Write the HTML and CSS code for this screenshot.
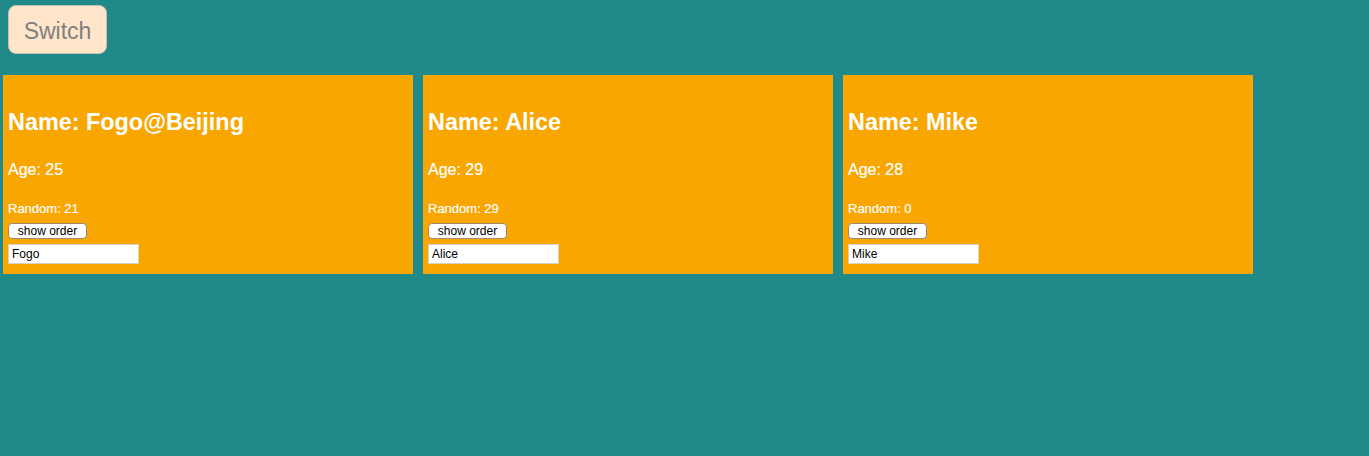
FILE: index.html
```html
<!DOCTYPE html>
<html>
<head>
<meta charset="utf-8">
<link rel="stylesheet" href="styles.css">
</head>
<body>
<div class="top"><button class="switch">Switch</button></div>
<div class="cards">
  <div class="card">
    <h2 class="name">Name: Fogo@Beijing</h2>
    <p class="age">Age: 25</p>
    <p class="random">Random: 21</p>
    <button class="order">show order</button>
    <input class="field" type="text" value="Fogo">
  </div>
  <div class="card">
    <h2 class="name">Name: Alice</h2>
    <p class="age">Age: 29</p>
    <p class="random">Random: 29</p>
    <button class="order">show order</button>
    <input class="field" type="text" value="Alice">
  </div>
  <div class="card">
    <h2 class="name">Name: Mike</h2>
    <p class="age">Age: 28</p>
    <p class="random">Random: 0</p>
    <button class="order">show order</button>
    <input class="field" type="text" value="Mike">
  </div>
</div>
</body>
</html>
```
FILE: styles.css
```css
html, body {
  margin: 0;
  height: 100%;
  background: #1f8a89;
  font-family: "Liberation Sans", Arial, sans-serif;
}
.top {
  padding: 5px 8px 0;
}
.switch {
  width: 99px;
  height: 49px;
  background: #ffe5ca;
  color: #808080;
  border: 1px solid #c9c0b5;
  border-radius: 8px;
  font-family: "Liberation Sans", Arial, sans-serif;
  font-size: 23px;
  padding: 3px 0 0;
  display: block;
}
.cards {
  display: flex;
  gap: 10px;
  padding: 0 3px;
  margin-top: 21px;
}
.card {
  width: 410px;
  height: 199px;
  box-sizing: border-box;
  background: #faa600;
  color: #fff;
  padding: 34px 5px 0;
  display: flex;
  flex-direction: column;
  align-items: flex-start;
}
.name {
  margin: 0 0 25px;
  font-size: 23.4px;
  font-weight: bold;
}
.age {
  margin: 0 0 22px;
  font-size: 16px;
  -webkit-text-stroke: 0.2px #fff;
}
.random {
  margin: 0 0 7px;
  font-size: 13px;
  -webkit-text-stroke: 0.2px #fff;
}
.order {
  height: 16px;
  width: 79px;
  padding: 0;
  font-family: "Liberation Sans", Arial, sans-serif;
  font-size: 12px;
  background: #fff;
  color: #000;
  border: 1px solid #9a8a70;
  border-radius: 4px;
  margin-bottom: 5px;
  line-height: 14px;
}
.field {
  width: 131px;
  height: 20px;
  box-sizing: border-box;
  border: 1px solid #d8d0c0;
  padding: 0 3px;
  font-family: "Liberation Sans", Arial, sans-serif;
  font-size: 12px;
  color: #000;
  background: #fff;
  margin: 0;
}
```
